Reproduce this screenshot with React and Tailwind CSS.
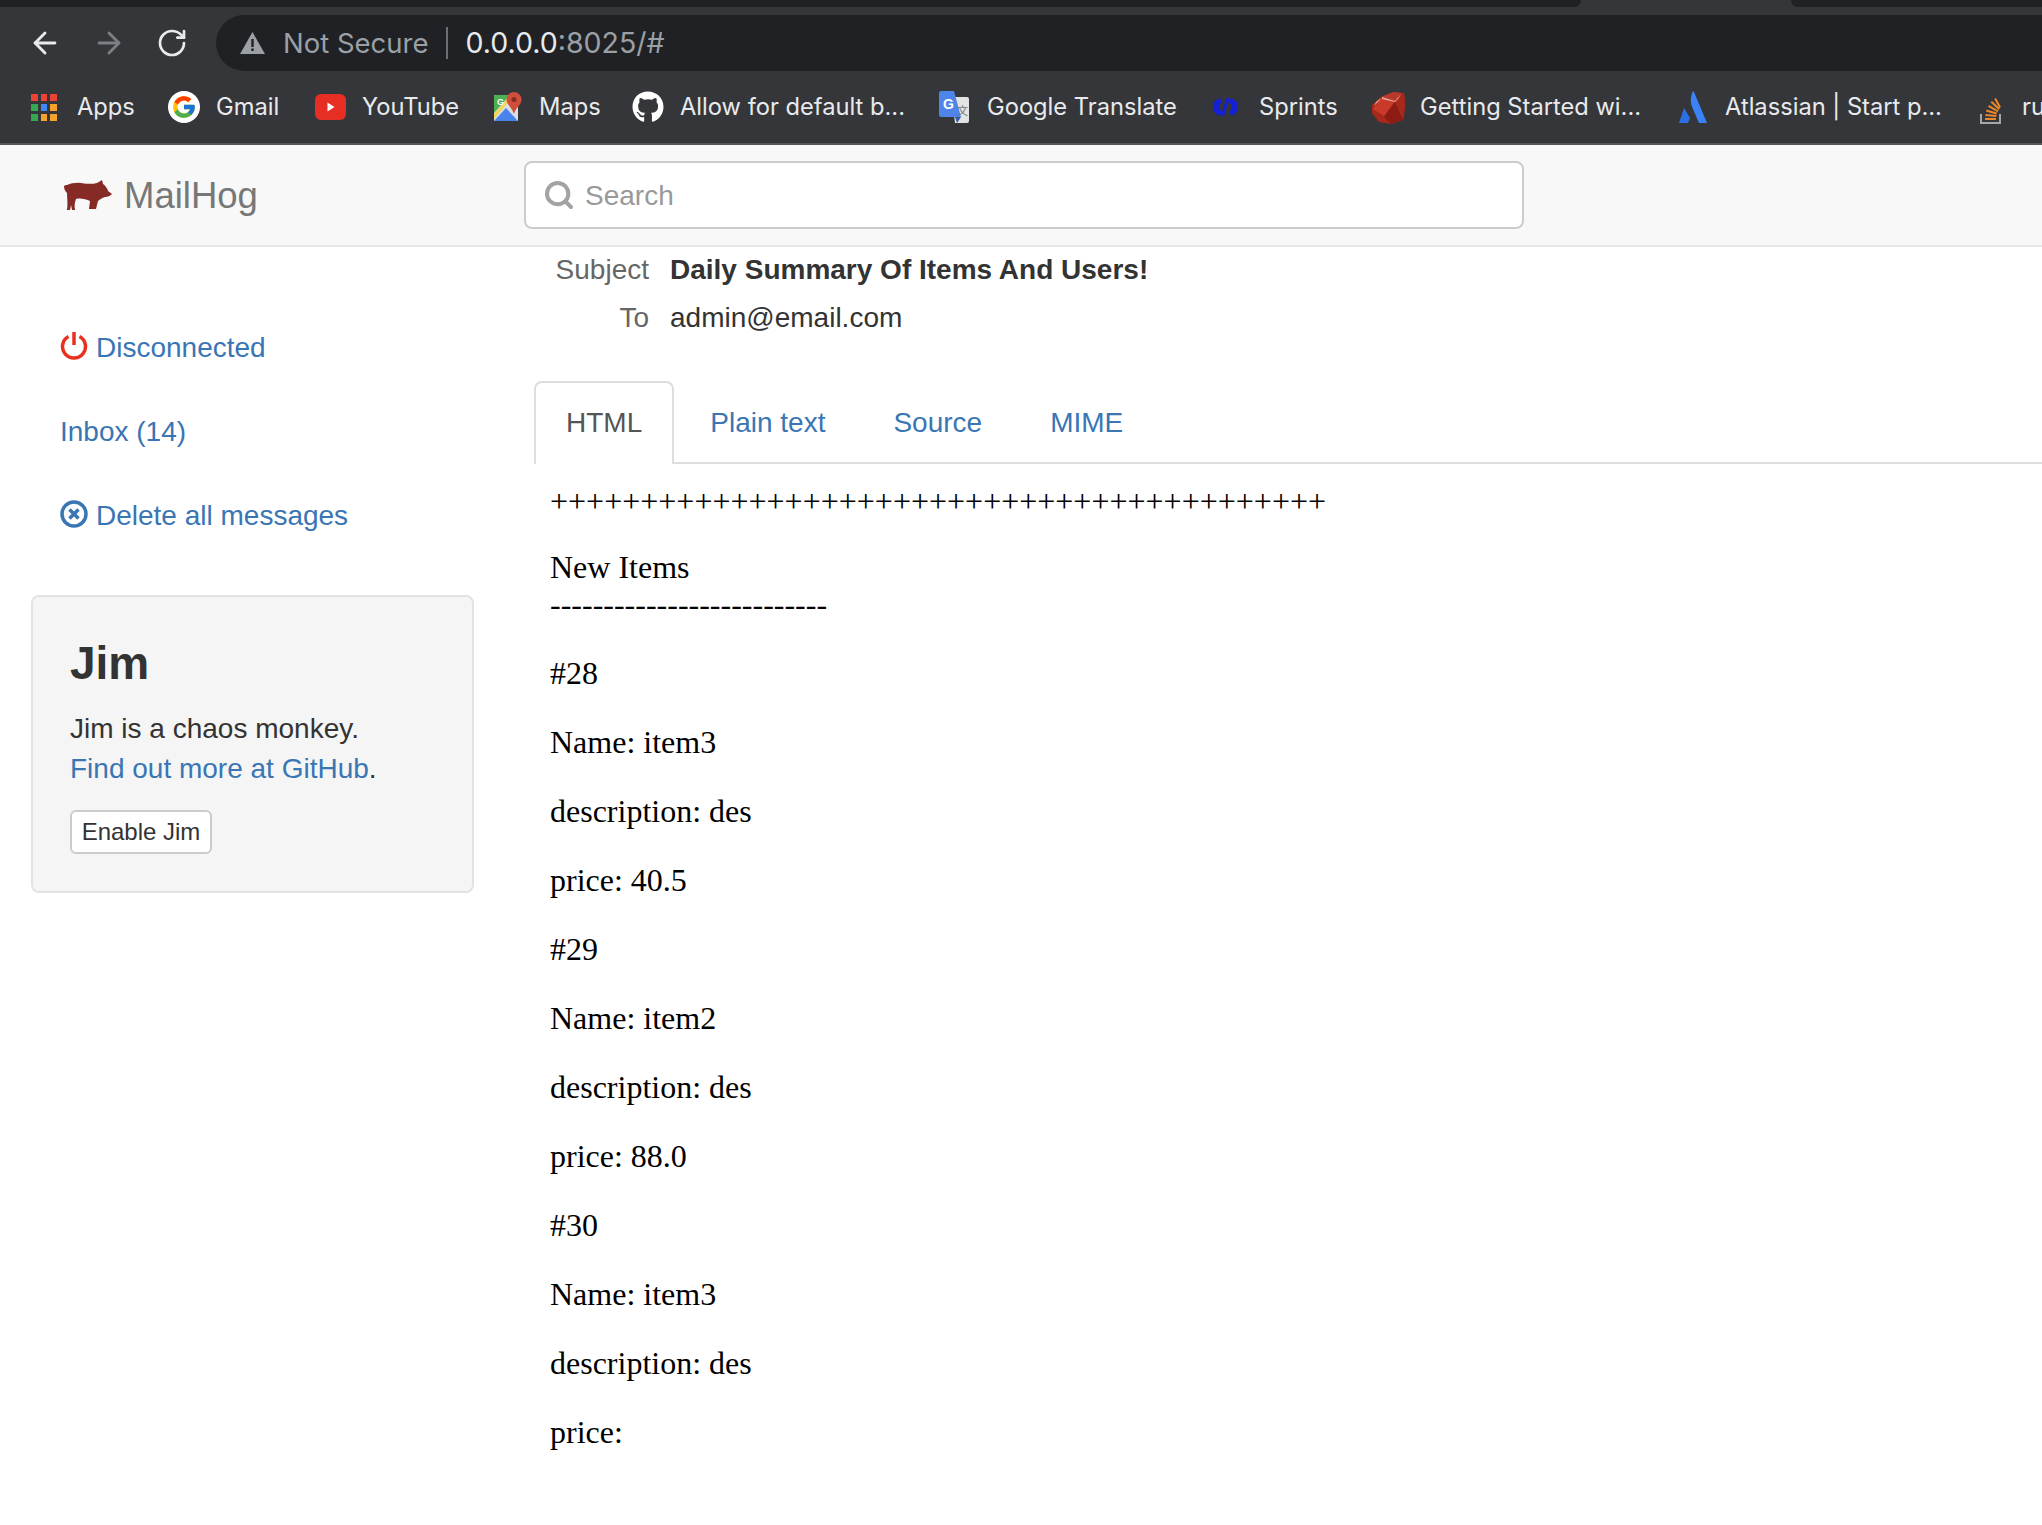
import React from 'react';
import { ArrowLeft, ArrowRight, RotateCw, Search } from 'lucide-react';
import { FaGithub } from 'react-icons/fa';
import { FcGoogle } from 'react-icons/fc';

function AppsIcon() {
  const colors = ['#ea4335', '#ea4335', '#ea4335', '#34a853', '#4285f4', '#f4a22d', '#34a853', '#f4a22d', '#f4a22d'];
  return (
    <div className="grid grid-cols-3 gap-[3px] w-[26px] h-[27px]">
      {colors.map((c, i) => (
        <span key={i} style={{ backgroundColor: c }} />
      ))}
    </div>
  );
}

function GmailIcon() {
  return (
    <div className="w-[32px] h-[32px] rounded-full bg-white flex items-center justify-center">
      <FcGoogle size={26} />
    </div>
  );
}

function YoutubeIcon() {
  return (
    <svg width="31" height="26" viewBox="0 0 31 26">
      <rect width="31" height="26" rx="6" fill="#e62e24" />
      <path d="M12.500 8.500l7 4.500-7 4.500z" fill="#fff" />
    </svg>
  );
}

function MapsIcon() {
  return (
    <svg width="30" height="30" viewBox="0 0 30 30">
      <path d="M1 3h24v26H1z" fill="#dcdfe3" />
      <path d="M1 4a1 1 0 0 1 1-1h15L1 21z" fill="#4caf50" />
      <path d="M1 29l12-13 12 13z" fill="#4a84ea" />
      <path d="M1 22L18 3h3L1 27z" fill="#f2d64b" />
      <text x="4" y="13" fontSize="9" fontWeight="700" fill="#fff" fontFamily="Liberation Sans">G</text>
      <path d="M21 0a7.500 7.500 0 0 1 7.500 7.500C28.500 13 23 15 21 22c-2-7-7.500-9-7.500-14.500A7.500 7.500 0 0 1 21 0z" fill="#cf4f3c" />
      <circle cx="21" cy="7.500" r="2.600" fill="#8a2c20" />
    </svg>
  );
}

function TranslateIcon() {
  return (
    <svg width="30" height="32" viewBox="0 0 30 32">
      <path d="M13 6h15a2 2 0 0 1 2 2v22a2 2 0 0 1-2 2H16z" fill="#e3e3e3" />
      <path d="M2 0h13l7 26H2a2 2 0 0 1-2-2V2a2 2 0 0 1 2-2z" fill="#4f84e8" />
      <path d="M16 26h6l-4 6z" fill="#3558a8" />
      <text x="4" y="18" fontSize="14" fontWeight="700" fill="#fff" fontFamily="Liberation Sans">G</text>
      <text x="18" y="24" fontSize="11" fill="#6b7780" fontFamily="Noto Sans CJK SC">文</text>
    </svg>
  );
}

function SprintsIcon() {
  return (
    <svg width="25" height="18" viewBox="0 0 25 18" fill="#1320d8">
      <path d="M7 0C2 2 0 5 0 9s2 7 7 9l1.500-5C6.500 12 6 10.500 6 9s.5-3 3-4.500z" />
      <path d="M18 0c5 2 7 5 7 9s-2 7-7 9l-1.500-5c2-1 2.500-2.500 2.500-4s-.5-3-3-4.500z" />
      <path d="M13.500 0h3.500l-6 18H7.500z" />
    </svg>
  );
}

function RubyIcon() {
  return (
    <svg width="35" height="33" viewBox="0 0 35 33">
      <path d="M22 1l11 1c2 8 1 20-1 27l-12 4-12-2-7-9v-8L10 6z" fill="#a9281c" />
      <path d="M10 7l14 3-11 15-11-7z" fill="#c93a2b" />
      <path d="M10 6l12-5 9 1-6 8z" fill="#b8382c" />
      <path d="M3 15c3-3 6-6 7-8l-5 4z M11 6l13 4 6-7-3 5-3 3-13-3z" fill="#e8a49c" />
      <path d="M13 26l11-15 8 18-12 4z" fill="#8c1c12" />
    </svg>
  );
}

function AtlassianIcon() {
  return (
    <svg width="28" height="32" viewBox="0 0 28 32">
      <path d="M5 17L0 32h9l2-5z" fill="#2f6fe4" />
      <path d="M14 0c-3 6-3 12 0 18l6 14h8L15 1c-.3-.7-.8-.7-1-1z" fill="#3b82f6" />
    </svg>
  );
}

function StackIcon() {
  return (
    <svg width="21" height="34" viewBox="0 0 21 34">
      <path d="M1 24v9h19v-9" fill="none" stroke="#a6a6a6" strokeWidth="2" />
      <path d="M5 28h11v2H5zM5.500 24l11 1-.2 2-11-1zM6.500 19.500l10.500 3-.6 2-10.500-3zM9 15l9.500 5.500-1 1.700-9.500-5.500zM12 11l8 7.500-1.400 1.500-8-7.500zM16 8l5 9-1.800 1-5-9z" fill="#e8872b" />
    </svg>
  );
}

function Pig() {
  return (
    <svg width="48" height="31" viewBox="0 0 48 31" fill="#862a26">
      <path d="M0 6c1-1 2-1 3-1 5-2 11-3 17-1.500 5 .5 10 .5 13-.5l5-3 1 4c3 2 5 6 5 7l4 3c-2 2-4 3-7 3-3 1-5 2-7 4l-2 8h-7l1-8c-4-2-10-3-14-2-1 3-2 6-1 11H8l-1-5-1 5H3c1-6 0-12 0-17C1 11 0 9 0 6z" />
    </svg>
  );
}

const bookmarks = [
  { label: 'Apps', icon: <AppsIcon />, iconBox: 'w-[46px]', width: 'w-[137px]' },
  { label: 'Gmail', icon: <GmailIcon />, iconBox: 'w-[48px]', width: 'w-[147px]' },
  { label: 'YouTube', icon: <YoutubeIcon />, iconBox: 'w-[47px]', width: 'w-[178px]' },
  { label: 'Maps', icon: <MapsIcon />, iconBox: 'w-[46px]', width: 'w-[139px]' },
  { label: 'Allow for default b...', icon: <FaGithub size={32} color="#fff" />, iconBox: 'w-[48px]', width: 'w-[307px]' },
  { label: 'Google Translate', icon: <TranslateIcon />, iconBox: 'w-[48px]', width: 'w-[274px]' },
  { label: 'Sprints', icon: <SprintsIcon />, iconBox: 'w-[46px]', width: 'w-[158px]' },
  { label: 'Getting Started wi...', icon: <RubyIcon />, iconBox: 'w-[49px]', width: 'w-[308px]' },
  { label: 'Atlassian | Start p...', icon: <AtlassianIcon />, iconBox: 'w-[46px]', width: 'w-[301px]' },
  { label: 'ru', icon: <StackIcon />, iconBox: 'w-[42px]', width: 'w-[62px]' },
];

function BrowserChrome() {
  return (
    <div className="bg-[#35363a] font-['Inter',sans-serif] overflow-hidden">
      {/* tab strip */}
      <div className="flex h-[7px]">
        <div className="w-[1581px] bg-[#202124] rounded-br-[7px]" />
        <div className="w-[210px]" />
        <div className="flex-1 bg-[#202124] rounded-bl-[7px]" />
      </div>
      {/* toolbar */}
      <div className="flex items-center h-[64px] pl-[28px] mt-[4px]">
        <ArrowLeft size={34} strokeWidth={2} className="text-[#e8eaed] mr-[30px]" />
        <ArrowRight size={34} strokeWidth={2} className="text-[#7d7f83] mr-[30px]" />
        <RotateCw size={32} strokeWidth={2} className="text-[#e8eaed] mr-[28px]" />
        <div className="flex-1 h-[56px] bg-[#202124] rounded-l-[28px] flex items-center pl-[24px]">
          <svg width="25" height="22" viewBox="0 0 25 22" className="mr-[18px]">
            <path d="M12.500 0L25 22H0z" fill="#9aa0a6" />
            <path d="M11.300 7h2.400v8h-2.400zM11.300 16.500h2.400V19h-2.400z" fill="#202124" />
          </svg>
          <span className="text-[27.500px] text-[#9aa0a6]">Not Secure</span>
          <span className="w-[2px] h-[32px] bg-[#6b6e72] ml-[17px] mr-[18px]" />
          <span className="text-[28.500px] text-[#e8eaed]">0.0.0.0</span>
          <span className="text-[28.500px] text-[#9aa0a6]">:8025/#</span>
        </div>
      </div>
      {/* bookmarks */}
      <div className="flex items-center h-[64px] pl-[31px] mb-[4px] whitespace-nowrap overflow-hidden">
        {bookmarks.map((b) => (
          <div key={b.label} className={`flex items-center shrink-0 ${b.width}`}>
            <div className={`shrink-0 flex items-center ${b.iconBox}`}>{b.icon}</div>
            <span className="text-[23.700px] text-[#e8eaed]">{b.label}</span>
          </div>
        ))}
      </div>
      <div className="h-[2px] bg-[#55565a]" />
    </div>
  );
}

function Navbar() {
  return (
    <div className="h-[102px] bg-[#f8f8f8] border-b-2 border-[#e7e7e7] flex items-center pl-[64px]">
      <div className="flex items-center w-[460px]">
        <Pig />
        <span className="text-[36.500px] text-[#777777] ml-[12px] mt-[2px]">MailHog</span>
      </div>
      <div className="w-[1000px] h-[68px] bg-white border-2 border-[#cccccc] rounded-lg flex items-center pl-[17px]">
        <Search size={32} strokeWidth={3} className="text-[#a3a3a3] mr-[10px]" />
        <span className="text-[28px] text-[#999999] mt-[2px]">Search</span>
      </div>
    </div>
  );
}

function Sidebar() {
  return (
    <div className="w-[534px] shrink-0 pl-[31px] pt-[81px]">
      <ul className="pl-[29px] text-[#3a75b4]">
        <li className="h-[40px] flex items-center mb-[44px]">
          <svg width="28" height="28" viewBox="0 0 28 28" fill="none" stroke="#e8321f" strokeWidth="3.500" className="mr-[8px] mb-[4px]">
            <path d="M8.500 4.500a11.500 11.500 0 1 0 11 0" />
            <path d="M14 0v13" />
          </svg>
          Disconnected
        </li>
        <li className="h-[40px] flex items-center mb-[44px]">Inbox (14)</li>
        <li className="h-[40px] flex items-center">
          <svg width="28" height="28" viewBox="0 0 28 28" fill="none" stroke="#3a75b4" strokeWidth="3.500" className="mr-[8px] mb-[4px]">
            <circle cx="14" cy="14" r="12" />
            <path d="M9.500 9.500l9 9M18.500 9.500l-9 9" />
          </svg>
          Delete all messages
        </li>
      </ul>
      <div className="w-[443px] h-[298px] mt-[59px] bg-[#f5f5f5] border-2 border-[#e3e3e3] rounded-lg pl-[37px] pt-[40px]">
        <h3 className="text-[46px] font-bold leading-[53px] text-[#333333]">Jim</h3>
        <p className="mt-[19px] leading-[40px] text-[#333333]">
          Jim is a chaos monkey.
          <br />
          <span className="text-[#3a75b4]">Find out more at GitHub</span>.
        </p>
        <button className="mt-[21px] w-[142px] h-[44px] bg-white border-2 border-[#cccccc] rounded-md text-[24px] text-[#333333]">
          Enable Jim
        </button>
      </div>
    </div>
  );
}

function EmailBody() {
  const items = [
    ['#28', 'Name: item3', 'description: des', 'price: 40.5'],
    ['#29', 'Name: item2', 'description: des', 'price: 88.0'],
    ['#30', 'Name: item3', 'description: des', 'price:'],
  ];
  return (
    <div className="font-['Liberation_Serif',serif] text-[32px] leading-[37px] text-black pl-[16px] pt-[19px]">
      <p className="mb-[29px]">{'+'.repeat(43)}</p>
      <p className="mb-[32px]">
        New Items
        <br />
        {'-'.repeat(26)}
      </p>
      {items.flat().map((line, i) => (
        <p key={i} className="mb-[32px]">{line}</p>
      ))}
    </div>
  );
}

function MainPanel() {
  const tabs = ['Plain text', 'Source', 'MIME'];
  return (
    <div className="flex-1 min-w-0">
      <table className="ml-[8px]">
        <tbody>
          <tr className="h-[45px]">
            <td className="w-[107px] text-right text-[#666666]">Subject</td>
            <td className="pl-[21px] font-bold text-[#333333]">Daily Summary Of Items And Users!</td>
          </tr>
          <tr className="h-[51px]">
            <td className="text-right text-[#666666]">To</td>
            <td className="pl-[21px] text-[#333333]">admin@email.com</td>
          </tr>
        </tbody>
      </table>
      <div className="flex mt-[38px] border-b-2 border-[#dddddd] h-[83px]">
        <div className="h-[83px] px-[30px] pt-[20px] bg-white border-2 border-b-0 border-[#dddddd] rounded-t-lg text-[#555555] leading-[40px] mr-[4px]">
          HTML
        </div>
        {tabs.map((t) => (
          <div key={t} className="px-[32px] pt-[22px] text-[#3a75b4] leading-[40px] mr-[4px]">{t}</div>
        ))}
      </div>
      <EmailBody />
    </div>
  );
}

export default function App() {
  return (
    <div className="h-[1525px] overflow-hidden bg-white font-['Liberation_Sans',sans-serif] text-[28px] leading-[40px]">
      <BrowserChrome />
      <Navbar />
      <div className="flex">
        <Sidebar />
        <MainPanel />
      </div>
    </div>
  );
}
